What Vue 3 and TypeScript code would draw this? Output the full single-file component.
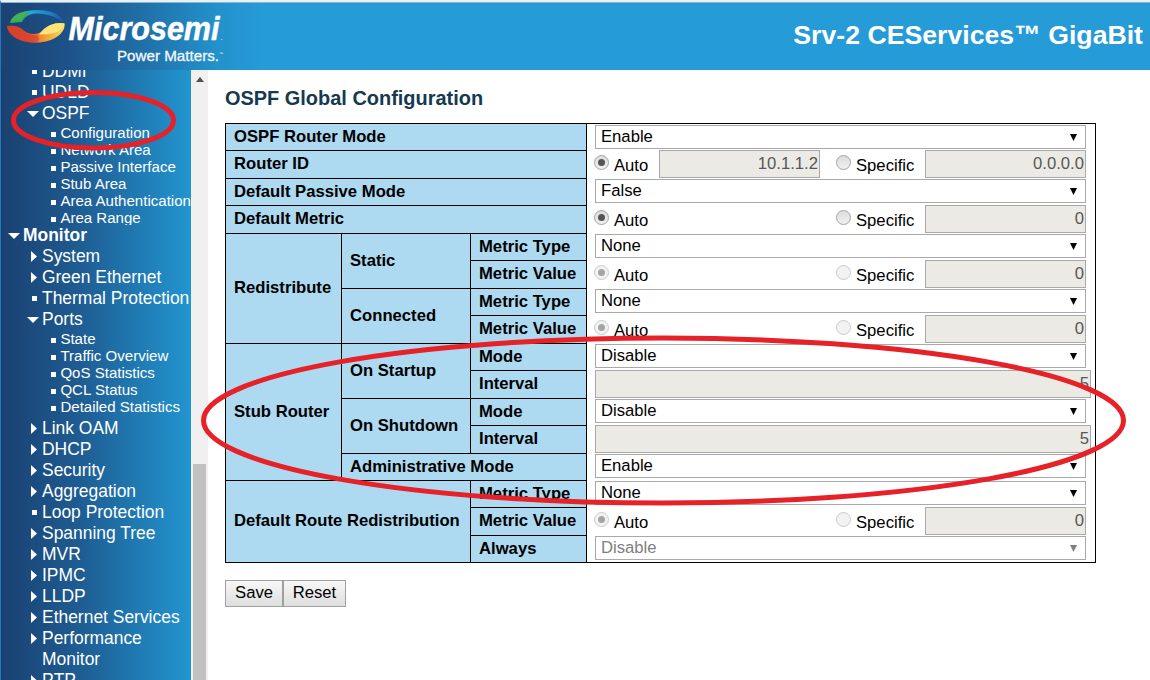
<script setup lang="ts">
interface NavItem {
  text: string
  icon: 'dot' | 'right' | 'down'
  level: 1 | 2
  children?: string[]
}

const nav: NavItem[] = [
  { text: 'DDMI', icon: 'dot', level: 2 },
  { text: 'UDLD', icon: 'dot', level: 2 },
  {
    text: 'OSPF', icon: 'down', level: 2,
    children: ['Configuration', 'Network Area', 'Passive Interface', 'Stub Area', 'Area Authentication', 'Area Range'],
  },
  { text: 'Monitor', icon: 'down', level: 1 },
  { text: 'System', icon: 'right', level: 2 },
  { text: 'Green Ethernet', icon: 'right', level: 2 },
  { text: 'Thermal Protection', icon: 'dot', level: 2 },
  {
    text: 'Ports', icon: 'down', level: 2,
    children: ['State', 'Traffic Overview', 'QoS Statistics', 'QCL Status', 'Detailed Statistics'],
  },
  { text: 'Link OAM', icon: 'right', level: 2 },
  { text: 'DHCP', icon: 'right', level: 2 },
  { text: 'Security', icon: 'right', level: 2 },
  { text: 'Aggregation', icon: 'right', level: 2 },
  { text: 'Loop Protection', icon: 'dot', level: 2 },
  { text: 'Spanning Tree', icon: 'right', level: 2 },
  { text: 'MVR', icon: 'right', level: 2 },
  { text: 'IPMC', icon: 'right', level: 2 },
  { text: 'LLDP', icon: 'right', level: 2 },
  { text: 'Ethernet Services', icon: 'right', level: 2 },
  { text: 'Performance Monitor', icon: 'right', level: 2 },
  { text: 'PTP', icon: 'right', level: 2 },
]

/* area: row-start / column-start / row-end / column-end */
const labels: { text: string; area: string }[] = [
  { text: 'OSPF Router Mode', area: '1 / 1 / 2 / 4' },
  { text: 'Router ID', area: '2 / 1 / 3 / 4' },
  { text: 'Default Passive Mode', area: '3 / 1 / 4 / 4' },
  { text: 'Default Metric', area: '4 / 1 / 5 / 4' },
  { text: 'Redistribute', area: '5 / 1 / 9 / 2' },
  { text: 'Static', area: '5 / 2 / 7 / 3' },
  { text: 'Metric Type', area: '5 / 3 / 6 / 4' },
  { text: 'Metric Value', area: '6 / 3 / 7 / 4' },
  { text: 'Connected', area: '7 / 2 / 9 / 3' },
  { text: 'Metric Type', area: '7 / 3 / 8 / 4' },
  { text: 'Metric Value', area: '8 / 3 / 9 / 4' },
  { text: 'Stub Router', area: '9 / 1 / 14 / 2' },
  { text: 'On Startup', area: '9 / 2 / 11 / 3' },
  { text: 'Mode', area: '9 / 3 / 10 / 4' },
  { text: 'Interval', area: '10 / 3 / 11 / 4' },
  { text: 'On Shutdown', area: '11 / 2 / 13 / 3' },
  { text: 'Mode', area: '11 / 3 / 12 / 4' },
  { text: 'Interval', area: '12 / 3 / 13 / 4' },
  { text: 'Administrative Mode', area: '13 / 2 / 14 / 4' },
  { text: 'Default Route Redistribution', area: '14 / 1 / 17 / 3' },
  { text: 'Metric Type', area: '14 / 3 / 15 / 4' },
  { text: 'Metric Value', area: '15 / 3 / 16 / 4' },
  { text: 'Always', area: '16 / 3 / 17 / 4' },
]

interface Control {
  kind: 'select' | 'choice' | 'input'
  value: string
  auto?: string
  disabled?: boolean
}

const controls: Control[] = [
  { kind: 'select', value: 'Enable' },
  { kind: 'choice', value: '0.0.0.0', auto: '10.1.1.2' },
  { kind: 'select', value: 'False' },
  { kind: 'choice', value: '0' },
  { kind: 'select', value: 'None' },
  { kind: 'choice', value: '0', disabled: true },
  { kind: 'select', value: 'None' },
  { kind: 'choice', value: '0', disabled: true },
  { kind: 'select', value: 'Disable' },
  { kind: 'input', value: '5' },
  { kind: 'select', value: 'Disable' },
  { kind: 'input', value: '5' },
  { kind: 'select', value: 'Enable' },
  { kind: 'select', value: 'None' },
  { kind: 'choice', value: '0', disabled: true },
  { kind: 'select', value: 'Disable', disabled: true },
]
</script>

<template>
  <div class="page">
    <header class="top">
      <svg class="logo" width="240" height="67" viewBox="0 3 240 67">
        <defs>
          <linearGradient id="arcTop" x1="0" x2="1" y1="0" y2="0">
            <stop offset="0" stop-color="#3fae49" />
            <stop offset="0.26" stop-color="#2da86a" />
            <stop offset="0.38" stop-color="#2aa4dc" />
            <stop offset="0.75" stop-color="#1d7fc4" />
            <stop offset="1" stop-color="#1a5ba4" />
          </linearGradient>
          <linearGradient id="arcBottom" x1="0" x2="1" y1="0" y2="0">
            <stop offset="0" stop-color="#c8322b" />
            <stop offset="0.4" stop-color="#e5522d" />
            <stop offset="0.65" stop-color="#f49a35" />
            <stop offset="1" stop-color="#f8de62" />
          </linearGradient>
        </defs>
        <path d="M10 23 C14 14 25 10 37 10 C50 10 61 14 63.500 22.500 C57 17 47 13.500 37 13.500 C29 14 24 17 22 22 Z" fill="url(#arcTop)" />
        <path d="M10 22 C13 15 19 12 28 11 C27 14 23 17 21 21 C17 20 13 20 10 22 Z" fill="#43b256" />
        <path d="M7 26 C12 25 18 26 22 29 C28 35 38 36 43 30 C48 25 57 21.500 64.500 23.500 C66 33 53 42.500 37 42.500 C21 43 8 36 7 26 Z" fill="url(#arcBottom)" />
        <path d="M7 26 C12 25 18 26 22 29 C26 34 33 36 37 35 C39 38 40 40 36 42.500 C21 43 8 36 7 26 Z" fill="#d9432c" opacity=".75" />
        <path d="M43 30 C48 25 57 21.500 64.500 23.500 C64 31 53 35 39 34.500 Z" fill="#fbe577" />
        <text class="brand" x="68.500" y="39.500" textLength="151" lengthAdjust="spacingAndGlyphs">Microsemi</text>
        <text class="brand-dot" x="220.500" y="39.500">.</text>
        <text class="motto" x="117" y="60.500" textLength="102" lengthAdjust="spacingAndGlyphs">Power Matters.</text>
        <text class="tm" x="219" y="55">™</text>
      </svg>
      <h1 class="product">Srv-2 CEServices™ GigaBit</h1>
    </header>

    <div class="body">
      <nav class="side">
        <div class="tree">
          <template v-for="item in nav" :key="item.text">
            <div class="item" :class="'level' + item.level">
              <span class="marker">
                <svg v-if="item.icon === 'down'" width="12" height="6" viewBox="0 0 12 6"><path d="M0 0H12L6 6Z" fill="#fff" /></svg>
                <svg v-else-if="item.icon === 'right'" class="right" width="6" height="11" viewBox="0 0 6 11"><path d="M0 0L6 5.500L0 11Z" fill="#fff" /></svg>
                <i v-else class="dot"></i>
              </span>
              <span>{{ item.text }}</span>
            </div>
            <ul v-if="item.children" class="sub" :class="{ clipped: item.text === 'OSPF' }">
              <li v-for="child in item.children" :key="child">{{ child }}</li>
            </ul>
          </template>
        </div>
      </nav>
      <div class="scroll">
        <svg class="up" width="8" height="5" viewBox="0 0 8 5"><path d="M4 0L8 5H0Z" fill="#505050" /></svg>
        <div class="thumb"></div>
      </div>

      <main class="main">
        <h2>OSPF Global Configuration</h2>
        <div class="table">
          <div v-for="(l, i) in labels" :key="'l' + i" class="label" :style="{ gridArea: l.area }">{{ l.text }}</div>
          <div
            v-for="(c, i) in controls"
            :key="'c' + i"
            class="control"
            :class="[c.kind, { disabled: c.disabled }]"
            :style="{ gridRow: i + 1 }"
          >
            <div v-if="c.kind === 'select'" class="select-box">
              <span>{{ c.value }}</span>
              <svg width="7" height="7" viewBox="0 0 7 7"><path d="M0 0H7L3.500 7Z" fill="currentColor" /></svg>
            </div>
            <div v-else-if="c.kind === 'input'" class="field wide">{{ c.value }}</div>
            <template v-else>
              <div class="option auto">
                <i class="radio on"></i><span class="caption">Auto</span>
                <div v-if="c.auto" class="field">{{ c.auto }}</div>
              </div>
              <div class="option">
                <i class="radio"></i><span class="caption specific">Specific</span>
                <div class="field">{{ c.value }}</div>
              </div>
            </template>
          </div>
        </div>
        <div class="actions">
          <button class="save">Save</button>
          <button class="reset">Reset</button>
        </div>
      </main>
    </div>

    <svg class="marks" width="1150" height="680" viewBox="0 0 1150 680">
      <ellipse cx="93.500" cy="120.300" rx="80" ry="27.800" />
      <ellipse cx="663.500" cy="420.500" rx="460" ry="82.500" />
    </svg>
  </div>
</template>

<style>
body {
  background: #fff;
  overflow: hidden;
}
</style>

<style scoped>
.page {
  position: relative;
  width: 1150px;
  height: 680px;
  overflow: hidden;
  font-family: "Liberation Sans", Arial, sans-serif;
  color: #000;
  display: flex;
  flex-direction: column;
}
.top {
  flex: none;
  box-sizing: border-box;
  height: 70px;
  border-top: 2px solid #e6f2f6;
  border-left: 1px solid #2a76bd;
  box-shadow: inset 0 1px #8fb4c8;
  background: linear-gradient(90deg, #1a4272 0, #1d5086 60px, #206fa7 140px, #2391cb 215px, #259bd7 260px);
  display: flex;
  justify-content: space-between;
  align-items: flex-start;
}
.logo {
  margin: 1px 0 0 -1px;
}
.brand {
  font: italic bold 32.500px "Liberation Sans", sans-serif;
  fill: #fff;
  stroke: #fff;
  stroke-width: 0.500px;
}
.brand-dot {
  font-size: 8px;
  fill: #fff;
}
.motto {
  font-size: 15px;
  fill: #f2f9fd;
  stroke: #f2f9fd;
  stroke-width: 0.300px;
}
.tm {
  font-size: 4px;
  fill: #fff;
}
.product {
  margin: 18px 7px 0 0;
  font-size: 26.670px;
  line-height: 31px;
  color: #fff;
}
.body {
  display: flex;
  flex: 1;
  min-height: 0;
}
.side {
  box-sizing: border-box;
  width: 191px;
  border-left: 1px solid #2a76bd;
  overflow: hidden;
  background: linear-gradient(90deg, #1a4070 0, #1e5d93 80px, #2295d0 190px);
  color: #fff;
}
.tree {
  margin-top: -9px;
}
.item {
  display: flex;
  font-size: 17.450px;
  line-height: 21px;
  white-space: nowrap;
}
.item > span:last-child {
  white-space: normal;
}
.marker {
  flex: none;
  display: flex;
  align-items: center;
  justify-content: center;
  height: 21px;
  width: 12px;
}
.level2 {
  padding-left: 26px;
}
.level2 .marker {
  margin-right: 3px;
}
.level1 {
  padding-left: 7px;
  font-weight: bold;
}
.level1 .marker {
  margin-right: 3px;
}
.right {
  margin-left: 2px;
}
.dot {
  width: 5px;
  height: 5px;
  margin-left: 2px;
  background: #fff;
}
.sub {
  list-style: none;
  margin: 0 0 3px;
  padding: 0 0 0 50px;
  font-size: 15.050px;
  line-height: 17px;
  overflow: hidden;
}
.clipped {
  height: 101px;
  margin-bottom: 0;
}
.sub li {
  display: flex;
  align-items: center;
  height: 17px;
  white-space: nowrap;
}
.sub li::before {
  content: "";
  flex: none;
  width: 5px;
  height: 5px;
  margin: 3px 4.400px 0 0;
  background: #fff;
}
.scroll {
  width: 17px;
  background: #f0f0f0;
  display: flex;
  flex-direction: column;
  align-items: center;
}
.up {
  margin-top: 7px;
}
.thumb {
  width: 13px;
  height: 216px;
  margin-top: auto;
  background: #c1c1c1;
}
.main {
  flex: 1;
  padding-left: 17px;
}
h2 {
  margin: 16px 0 13px;
  font-size: 19.950px;
  line-height: 24px;
  color: #153a4f;
}
.table {
  display: grid;
  box-sizing: border-box;
  width: 871px;
  border: 1px solid #000;
  border-bottom: 0;
  grid-template-columns: 116px 129px 116px 508px;
  grid-template-rows: 27px 28px 27px 28px 27px 28px 27px 28px 27px 28px 27px 28px 27px 27px 28px 27px;
  box-shadow: 0 1px #000;
  height: 439px;
  margin-bottom: 18px;
}
.label {
  display: flex;
  align-items: center;
  padding-left: 8px;
  border-right: 1px solid #000;
  border-bottom: 1px solid #000;
  background: #addaf0;
  font-weight: bold;
  font-size: 16.670px;
  line-height: 20px;
  padding-bottom: 1px;
  white-space: nowrap;
}
.control {
  grid-column: 4;
  display: flex;
  align-items: flex-start;
  padding-left: 8px;
  font-size: 16.670px;
}
.select-box {
  box-sizing: border-box;
  width: 491px;
  height: 24px;
  border: 1px solid #a9a9a9;
  display: flex;
  justify-content: space-between;
  align-items: center;
  padding: 0 8px 0 5px;
  line-height: 20px;
}
.select-box span {
  margin-top: 0;
}
.control:nth-child(24) .select-box {
  margin-top: 1px;
}
.control:nth-child(24) .select-box span {
  margin-top: -1px;
}
.select.disabled .select-box {
  color: #808080;
}
.field {
  box-sizing: border-box;
  width: 161px;
  height: 28px;
  margin-top: -1px;
  border: 1px solid #a9a9a9;
  background: #ebeae5;
  color: #575757;
  line-height: 25px;
  text-align: right;
  padding-right: 1px;
}
.field.wide {
  width: 496px;
}
.option {
  display: flex;
  align-items: flex-start;
}
.option.auto {
  width: 242px;
}
.radio {
  box-sizing: border-box;
  width: 15px;
  height: 15px;
  margin: 4px 5px 0 -1px;
  border: 1px solid #a3a3a3;
  border-radius: 50%;
  background: linear-gradient(#dcdcdc, #f0f0f0);
  display: flex;
  align-items: center;
  justify-content: center;
}
.radio.on::before {
  content: "";
  width: 7px;
  height: 7px;
  border-radius: 50%;
  background: #555;
}
.disabled .radio {
  border-color: #ccc;
  background: #f2f2f2;
}
.disabled .radio.on::before {
  background: #a5a5a5;
}
.caption {
  line-height: 20px;
  margin-top: 5px;
  width: 45px;
}
.specific {
  width: 69px;
}
.actions {
  display: flex;
}
button {
  box-sizing: border-box;
  height: 27px;
  padding: 0 0 2px;
  border: 1px solid #a0a0a0;
  border-radius: 0;
  background: linear-gradient(#f7f7f7, #dedede);
  font: 16.670px "Liberation Sans", Arial, sans-serif;
  color: #000;
}
.save {
  width: 58px;
}
.reset {
  width: 63px;
}
.marks {
  position: absolute;
  left: 0;
  top: 0;
  fill: none;
  stroke: #e62127;
  stroke-width: 5px;
  pointer-events: none;
}
</style>
